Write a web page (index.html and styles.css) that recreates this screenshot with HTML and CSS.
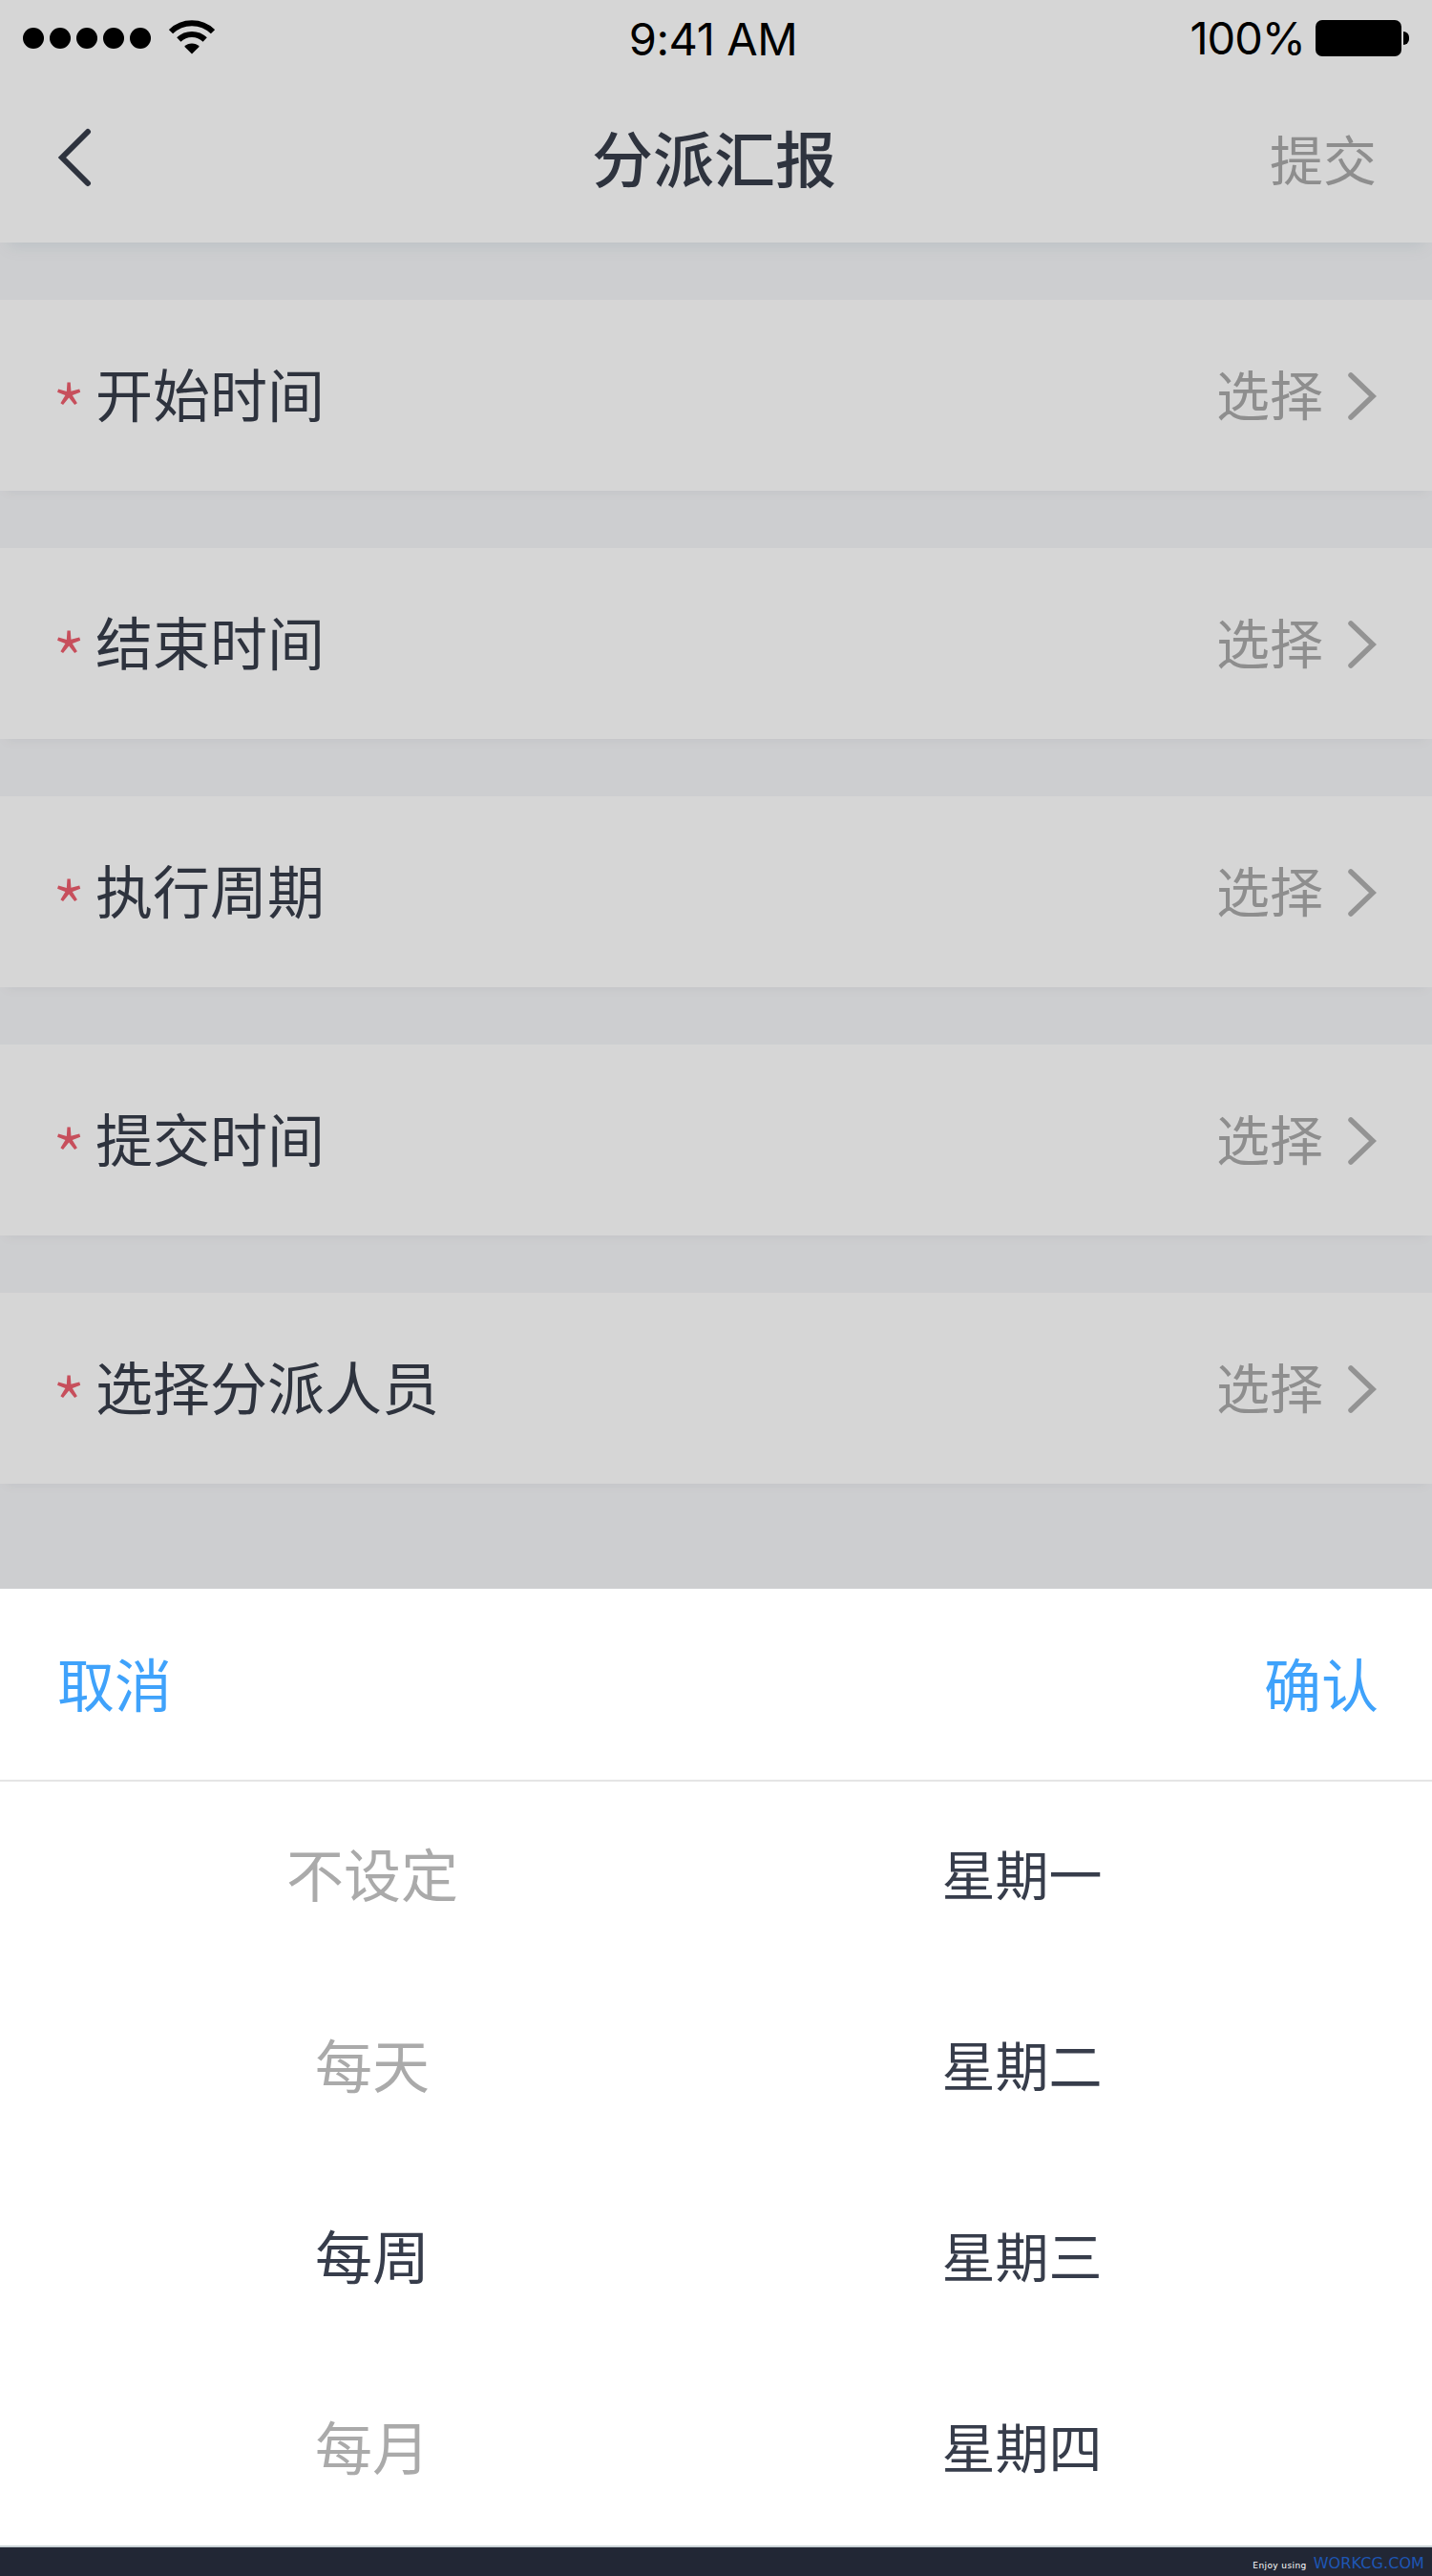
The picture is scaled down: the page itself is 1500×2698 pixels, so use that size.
FILE: index.html
```
<!DOCTYPE html>
<html lang="zh-CN">
<head>
    <meta charset="UTF-8">
    <meta name="viewport" content="width=device-width, initial-scale=1.0">
    <title>分派汇报</title>
    <link rel="stylesheet" href="styles.css">
</head>
<body>

<div class="page">
    <div class="header">
        <div class="status-bar">
            <div class="signal">
                <span class="dot"></span>
                <span class="dot"></span>
                <span class="dot"></span>
                <span class="dot"></span>
                <span class="dot"></span>
                <svg class="wifi" width="48" height="36" viewBox="0 0 48 36">
                    <path d="M2 12.2A31.5 31.5 0 0 1 46 12.2" fill="none" stroke="#000" stroke-width="6"/>
                    <path d="M10.300 20.500A19.500 19.500 0 0 1 37.700 20.500" fill="none" stroke="#000" stroke-width="6"/>
                    <path d="M16.200 27.800A11 11 0 0 1 31.800 27.800L24 35.600Z"/>
                </svg>
            </div>
            <div class="time">9:41 AM</div>
            <div class="power">
                <span class="percent">100%</span>
                <span class="battery"></span>
                <span class="battery-cap"></span>
            </div>
        </div>
        <div class="nav">
            <svg class="back" width="36" height="64" viewBox="0 0 36 64">
                <path d="M32 5L5 32L32 59" fill="none" stroke="#373d4b" stroke-width="6" stroke-linecap="round"/>
            </svg>
            <h1 class="title">分派汇报</h1>
            <span class="submit">提交</span>
        </div>
    </div>

    <div class="form">
        <div class="row">
            <span class="required">*</span>
            <span class="label">开始时间</span>
            <span class="value">选择</span>
            <svg class="arrow" width="30" height="50" viewBox="0 0 30 50"><path d="M3 3L26 25L3 47"/></svg>
        </div>
        <div class="row">
            <span class="required">*</span>
            <span class="label">结束时间</span>
            <span class="value">选择</span>
            <svg class="arrow" width="30" height="50" viewBox="0 0 30 50"><path d="M3 3L26 25L3 47"/></svg>
        </div>
        <div class="row">
            <span class="required">*</span>
            <span class="label">执行周期</span>
            <span class="value">选择</span>
            <svg class="arrow" width="30" height="50" viewBox="0 0 30 50"><path d="M3 3L26 25L3 47"/></svg>
        </div>
        <div class="row">
            <span class="required">*</span>
            <span class="label">提交时间</span>
            <span class="value">选择</span>
            <svg class="arrow" width="30" height="50" viewBox="0 0 30 50"><path d="M3 3L26 25L3 47"/></svg>
        </div>
        <div class="row">
            <span class="required">*</span>
            <span class="label">选择分派人员</span>
            <span class="value">选择</span>
            <svg class="arrow" width="30" height="50" viewBox="0 0 30 50"><path d="M3 3L26 25L3 47"/></svg>
        </div>
    </div>

    <div class="mask"></div>
</div>

<div class="sheet">
    <div class="sheet-bar">
        <span>取消</span>
        <span>确认</span>
    </div>
    <div class="picker">
        <ul class="column cycle">
            <li>不设定</li>
            <li>每天</li>
            <li class="active">每周</li>
            <li>每月</li>
        </ul>
        <ul class="column day">
            <li>星期一</li>
            <li>星期二</li>
            <li>星期三</li>
            <li>星期四</li>
        </ul>
    </div>
</div>

<div class="footer">
    <span class="enjoy">Enjoy using</span>
    <span class="site">WORKCG.COM</span>
</div>

</body>
</html>
```
FILE: styles.css
```
* {
    box-sizing: border-box;
}

body {
    margin: 0;
    width: 1500px;
    font-family: 'Noto Sans CJK SC', sans-serif;
    color: #373d4b;
    background-color: #fff;
}

/* form page */
.page {
    position: relative;
    height: 1664px;
    overflow: hidden;
    background-color: #f5f6f8;
}

.mask {
    position: absolute;
    inset: 0;
    background-color: rgba(0, 0, 0, 0.16);
}

.header {
    height: 254px;
    background-color: #fff;
    box-shadow: 0 12px 16px -8px rgba(70, 120, 150, 0.12);
}

.status-bar {
    display: grid;
    grid-template-columns: 1fr auto 1fr;
    align-items: center;
    height: 78px;
    padding: 0 24px;
    font-family: 'Inter', sans-serif;
    font-size: 47px;
    line-height: 78px;
    color: #000;
}

.signal {
    display: flex;
    align-items: center;
    gap: 6px;
}

.dot {
    width: 22px;
    height: 22px;
    border-radius: 50%;
    background-color: #000;
}

.wifi {
    margin-left: 13px;
    margin-bottom: 3px;
}

.time {
    padding-top: 2px;
    padding-right: 6px;
    letter-spacing: -0.4px;
}

.power {
    display: flex;
    align-items: center;
    justify-content: flex-end;
}

.percent {
    margin-right: 11px;
    letter-spacing: -1px;
}

.battery {
    width: 90px;
    height: 38px;
    border-radius: 7px;
    background-color: #000;
}

.battery-cap {
    width: 6px;
    height: 14px;
    margin-left: 2px;
    border-radius: 0 6px 6px 0;
    background-color: #000;
}

.nav {
    display: grid;
    grid-template-columns: 1fr auto 1fr;
    align-items: center;
    height: 176px;
    padding: 0 58px 0 60px;
}

.back {
    margin-bottom: 3px;
}

.title {
    margin: 0;
    padding-right: 6px;
    padding-bottom: 6px;
    font-size: 64px;
    font-weight: 500;
    line-height: 90px;
}

.submit {
    justify-self: end;
    padding-bottom: 3px;
    font-size: 56px;
    line-height: 80px;
    color: #aaa;
}

.form {
    display: flex;
    flex-direction: column;
    gap: 60px;
    padding-top: 60px;
}

.row {
    display: flex;
    align-items: center;
    height: 200px;
    padding: 0 58px;
    background-color: #fff;
    box-shadow: 0 8px 10px -6px rgba(80, 90, 120, 0.07);
}

.required {
    width: 46px;
    margin-left: -4px;
    padding-top: 32px;
    font-size: 82px;
    font-weight: 300;
    line-height: 80px;
    color: #ee5f6e;
}

.label {
    flex: 1;
    padding-bottom: 6px;
    font-size: 60px;
    line-height: 88px;
}

.value {
    padding-bottom: 6px;
    font-size: 56px;
    line-height: 80px;
    color: #aaa;
}

.arrow {
    margin-left: 26px;
    margin-top: 2px;
}

.arrow path {
    fill: none;
    stroke: #b0b0b0;
    stroke-width: 5.5;
    stroke-linecap: round;
}

/* bottom sheet */
.sheet {
    height: 1004px;
    border-bottom: 2px solid #c9d2d6;
}

.sheet-bar {
    display: flex;
    align-items: center;
    justify-content: space-between;
    height: 202px;
    padding: 0 56px 6px 60px;
    border-bottom: 2px solid #e5e5e5;
    font-size: 60px;
    color: #3fa2fb;
}

.picker {
    display: flex;
}

.column {
    margin: 0;
    padding: 0;
    list-style: none;
    text-align: center;
}

.column li {
    height: 200px;
    line-height: 190px;
}

.cycle {
    width: 780px;
    font-size: 60px;
    color: #aaa;
}

.cycle .active {
    color: #373d4b;
}

.day {
    width: 581px;
    font-size: 56px;
}

.footer {
    display: flex;
    align-items: baseline;
    justify-content: flex-end;
    gap: 7px;
    height: 30px;
    padding-right: 8px;
    background-color: #222735;
    font-family: 'DejaVu Sans', sans-serif;
    line-height: 33px;
}

.enjoy {
    font-size: 9px;
    letter-spacing: 0.4px;
    color: #fff;
}

.site {
    font-size: 16px;
    letter-spacing: 0.1px;
    color: #1e56b4;
}
```
